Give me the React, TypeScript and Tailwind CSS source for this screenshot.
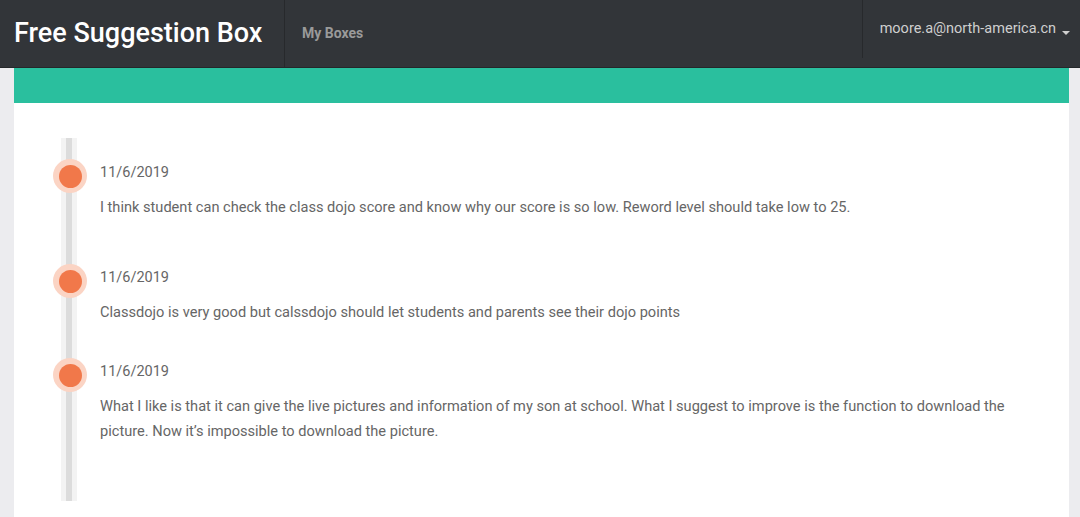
const items = [
    { date: "11/6/2019", text: "I think student can check the class dojo score and know why our score is so low. Reword level should take low to 25.", gap: "mt-[48px]" },
    { date: "11/6/2019", text: "Classdojo is very good but calssdojo should let students and parents see their dojo points", gap: "mt-[37px]" },
    { date: "11/6/2019", text: "What I like is that it can give the live pictures and information of my son at school. What I suggest to improve is the function to download the picture. Now it’s impossible to download the picture.", gap: "mt-0" },
]

const App = () => {
    return (
        <div className="w-[1080px] h-[517px] overflow-hidden bg-[#ececef] font-['Roboto',sans-serif]">
            <nav className="h-[68px] bg-[#323539] border-b border-[#25272a] flex items-stretch">
                <div className="pl-[14px] w-[285px] flex items-center border-r border-[#27292c]">
                    <span className="text-white text-[27px] font-medium leading-none">Free Suggestion Box</span>
                </div>
                <div className="pl-[17px] flex items-center">
                    <span className="text-[#9a9a9a] text-[14px] font-bold">My Boxes</span>
                </div>
                <div className="ml-auto flex">
                    <div className="w-px h-[58px] bg-[#27292c]" />
                    <div className="pl-[17px] pr-[10px] pt-[19px] flex items-start gap-[6px]">
                        <span className="text-[#cfcfcf] text-[14.5px] leading-[20px]">moore.a@north-america.cn</span>
                        <span className="mt-[12px] w-0 h-0 border-l-[4px] border-r-[4px] border-t-[4px] border-l-transparent border-r-transparent border-t-[#cfcfcf]" />
                    </div>
                </div>
            </nav>
            <div className="mx-[14px] mr-[11px] bg-white h-[449px]">
                <div className="h-[35px] bg-[#2abf9e]" />
                <div className="relative pl-[86px] pt-[60px]">
                    <div className="absolute left-[47px] top-[35px] w-[16px] h-[363px] bg-[#f3f3f3] flex justify-center">
                        <div className="w-[6px] h-full bg-[#dcdcdc]" />
                    </div>
                    {items.map((e, i) => (
                        <div key={i} className="relative">
                            <div className="absolute -left-[47px] -top-[4px] w-[34px] h-[34px] rounded-full bg-[#fbd4c4] flex items-center justify-center">
                                <div className="w-[23px] h-[23px] rounded-full bg-[#f1784a]" />
                            </div>
                            <div className="text-[#666] text-[14.5px] leading-[20px]">{e.date}</div>
                            <div className="mt-[12px] text-[#666] text-[14.6px] leading-[25px] pr-[60px]">{e.text}</div>
                            <div className={e.gap} />
                        </div>
                    ))}
                </div>
            </div>
        </div>
    )
}

export default App
